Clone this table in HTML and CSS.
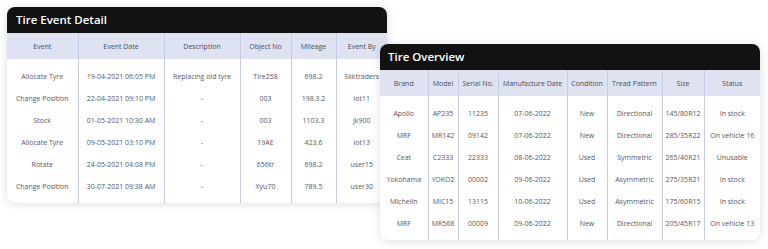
FILE: index.html
```html
<!DOCTYPE html>
<html>
<head>
<meta charset="utf-8">
<link rel="stylesheet" href="styles.css">
</head>
<body>
<div class="stage">
  <section class="card card-events">
    <h2 class="card-title">Tire Event Detail</h2>
    <table class="grid">
      <colgroup>
        <col style="width:71px"><col style="width:86px"><col style="width:76px"><col style="width:51px"><col style="width:45px"><col style="width:51px">
      </colgroup>
      <thead>
        <tr><th>Event</th><th>Event Date</th><th>Description</th><th>Object No</th><th>Mileage</th><th>Event By</th></tr>
      </thead>
      <tbody>
        <tr><td>Allocate Tyre</td><td>19-04-2021 06:05 PM</td><td>Replacing old tyre</td><td>Tire258</td><td>698.2</td><td>Skktraders</td></tr>
        <tr><td>Change Position</td><td>22-04-2021 09:10 PM</td><td>-</td><td>003</td><td>198.3.2</td><td>iot11</td></tr>
        <tr><td>Stock</td><td>01-05-2021 10:30 AM</td><td>-</td><td>003</td><td>1103.3</td><td>jk900</td></tr>
        <tr><td>Allocate Tyre</td><td>09-05-2021 03:10 PM</td><td>-</td><td>19AE</td><td>423.6</td><td>iot13</td></tr>
        <tr><td>Rotate</td><td>24-05-2021 04:08 PM</td><td>-</td><td>656tr</td><td>698.2</td><td>user15</td></tr>
        <tr><td>Change Position</td><td>30-07-2021 09:38 AM</td><td>-</td><td>Xyu70</td><td>789.5</td><td>user30</td></tr>
      </tbody>
    </table>
  </section>
  <section class="card card-overview">
    <h2 class="card-title">Tire Overview</h2>
    <table class="grid">
      <colgroup>
        <col style="width:48px"><col style="width:30px"><col style="width:40px"><col style="width:69px"><col style="width:40px"><col style="width:55px"><col style="width:42px"><col style="width:56px">
      </colgroup>
      <thead>
        <tr><th>Brand</th><th>Model</th><th>Serial No.</th><th>Manufacture Date</th><th>Condition</th><th>Tread Pattern</th><th>Size</th><th>Status</th></tr>
      </thead>
      <tbody>
        <tr><td>Apollo</td><td>AP235</td><td>11235</td><td>07-06-2022</td><td>New</td><td>Directional</td><td>145/80R12</td><td>In stock</td></tr>
        <tr><td>MRF</td><td>MR142</td><td>09142</td><td>07-06-2022</td><td>New</td><td>Directional</td><td>285/35R22</td><td>On vehicle 16</td></tr>
        <tr><td>Ceat</td><td>C2333</td><td>22333</td><td>08-06-2022</td><td>Used</td><td>Symmetric</td><td>265/40R21</td><td>Unusable</td></tr>
        <tr><td>Yokohama</td><td>YOKO2</td><td>00002</td><td>09-06-2022</td><td>Used</td><td>Asymmetric</td><td>275/35R21</td><td>In stock</td></tr>
        <tr><td>Michelin</td><td>MIC15</td><td>13115</td><td>10-06-2022</td><td>Used</td><td>Asymmetric</td><td>175/60R15</td><td>In stock</td></tr>
        <tr><td>MRF</td><td>MR568</td><td>00009</td><td>09-06-2022</td><td>New</td><td>Directional</td><td>205/45R17</td><td>On vehicle 13</td></tr>
      </tbody>
    </table>
  </section>
</div>
</body>
</html>
```

FILE: styles.css
```css
html, body {
  margin: 0;
  padding: 0;
  background: #ffffff;
}

body {
  font-family: "Open Sans", "Noto Sans", sans-serif;
  width: 768px;
  height: 249px;
  overflow: hidden;
}

.stage {
  display: grid;
  grid-template-columns: 768px;
  grid-template-rows: 249px;
}

.card {
  grid-area: 1 / 1;
  width: 380px;
  background: #ffffff;
  border-radius: 8px;
  box-shadow: 0 1px 8px rgba(40, 44, 70, 0.16);
  overflow: hidden;
  align-self: start;
  justify-self: start;
}

.card-events {
  margin: 7px 0 0 7px;
}

.card-overview {
  margin: 44px 0 0 380px;
}

.card-title {
  margin: 0;
  height: 26px;
  line-height: 26px;
  padding-left: 9px;
  background: #121212;
  color: #ffffff;
  font-size: 11.5px;
  font-weight: 600;
}

.card-overview .card-title {
  padding-left: 8px;
}

.grid {
  border-collapse: collapse;
  table-layout: fixed;
  width: 380px;
}

.grid th,
.grid td {
  text-align: center;
  white-space: nowrap;
  overflow: hidden;
  padding: 0;
  font-size: 7px;
  border-left: 1px solid #c6cbe6;
}

.grid th:first-child,
.grid td:first-child {
  border-left: none;
}

.grid th {
  height: 26px;
  background: #dfe3f1;
  color: #4a4c58;
  font-weight: 500;
}

.grid td {
  height: 22px;
  line-height: 22px;
  vertical-align: top;
  color: #56585f;
}

.grid tbody tr:first-child td {
  height: 29px;
  padding-top: 7px;
  box-sizing: border-box;
}

.grid tbody tr:last-child td {
  height: 27px;
  padding-bottom: 5px;
  box-sizing: border-box;
}
```
